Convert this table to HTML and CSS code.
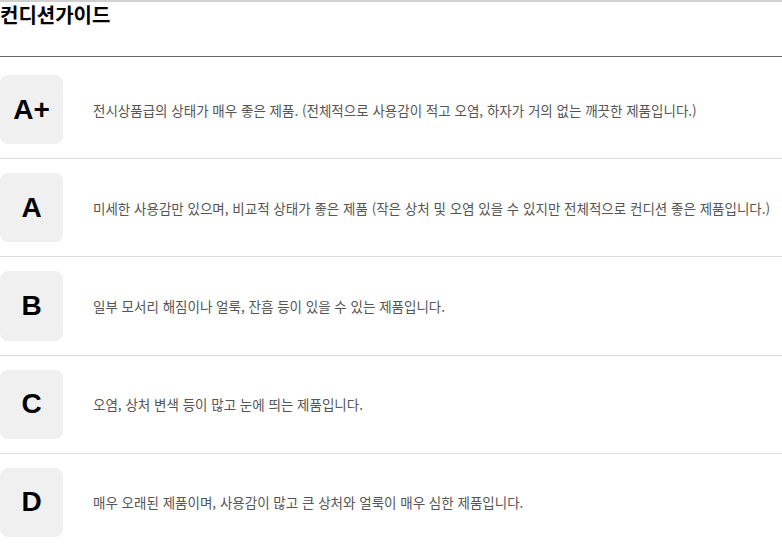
FILE: index.html
```html
<!DOCTYPE html>
<html lang="ko">
<head>
<meta charset="utf-8">
<link rel="stylesheet" href="styles.css">
</head>
<body>
<div class="guide">
  <div class="guide-head">
    <h2 class="guide-title">컨디션가이드</h2>
  </div>
  <ul class="grade-list">
    <li class="grade-row">
      <div class="grade-badge">A+</div>
      <p class="grade-desc">전시상품급의 상태가 매우 좋은 제품. (전체적으로 사용감이 적고 오염, 하자가 거의 없는 깨끗한 제품입니다.)</p>
    </li>
    <li class="grade-row">
      <div class="grade-badge">A</div>
      <p class="grade-desc">미세한 사용감만 있으며, 비교적 상태가 좋은 제품 (작은 상처 및 오염 있을 수 있지만 전체적으로 컨디션 좋은 제품입니다.)</p>
    </li>
    <li class="grade-row">
      <div class="grade-badge">B</div>
      <p class="grade-desc">일부 모서리 해짐이나 얼룩, 잔흠 등이 있을 수 있는 제품입니다.</p>
    </li>
    <li class="grade-row">
      <div class="grade-badge">C</div>
      <p class="grade-desc">오염, 상처 변색 등이 많고 눈에 띄는 제품입니다.</p>
    </li>
    <li class="grade-row">
      <div class="grade-badge">D</div>
      <p class="grade-desc">매우 오래된 제품이며, 사용감이 많고 큰 상처와 얼룩이 매우 심한 제품입니다.</p>
    </li>
  </ul>
</div>
</body>
</html>
```
FILE: styles.css
```css
html, body {
  margin: 0;
  padding: 0;
  background: #fff;
}
body {
  font-family: "Noto Sans CJK KR", "Noto Sans", sans-serif;
  color: #111;
}
.guide {
  border-top: 2px solid #d0d0d0;
}
.guide-head {
  height: 54px;
  border-bottom: 1px solid #666;
  margin-bottom: 4px;
}
.guide-title {
  margin: 0;
  font-size: 20px;
  font-weight: 700;
  line-height: 26px;
  color: #000;
}
.grade-list {
  list-style: none;
  margin: 0;
  padding: 0;
}
.grade-row {
  display: flex;
  align-items: center;
  padding: 14px 0;
  border-bottom: 1px solid #dcdcdc;
}
.grade-row:last-child {
  border-bottom: none;
}
.grade-badge {
  flex: none;
  width: 63px;
  height: 69.2px;
  border-radius: 8px;
  background: #f0f0f0;
  display: flex;
  align-items: center;
  justify-content: center;
  font-family: "Liberation Sans", Arial, sans-serif;
  font-weight: 700;
  font-size: 28px;
  color: #000;
}
.grade-desc {
  margin: 0 0 0 30px;
  font-size: 13.5px;
  color: #555;
  line-height: 20px;
}
```
